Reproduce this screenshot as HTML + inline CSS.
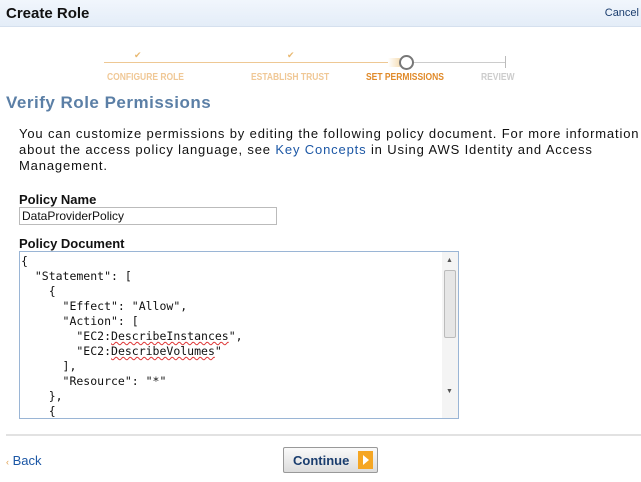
<!DOCTYPE html>
<html><head><style>
*{margin:0;padding:0;box-sizing:border-box}
body{width:641px;height:482px;background:#fff;font-family:"Liberation Sans",sans-serif;position:relative;overflow:hidden}
.hdr{position:absolute;left:0;top:0;width:641px;height:27px;background:linear-gradient(#f1f6fc,#e4edf8);border-bottom:1px solid #d5e0ee}
.hdr b{position:absolute;left:6px;top:5px;font-size:15px;color:#111}
.hdr span{position:absolute;right:2px;top:7px;font-size:11px;color:#1a3d6e}
.step{position:absolute;top:72px;font-size:10px;font-weight:bold;transform:scaleX(0.85);transform-origin:0 0;white-space:nowrap}
.ck{position:absolute;top:50px;font-size:9px;color:#e8b870}
h2{position:absolute;left:6px;top:93px;font-size:17px;color:#5b7fa6;letter-spacing:0.5px}
p.t{position:absolute;left:19px;top:126px;font-size:13px;line-height:16px;color:#111;white-space:nowrap;letter-spacing:0.85px}
p.t a{color:#1c57a5}
.lbl{position:absolute;left:19px;font-size:13px;font-weight:bold;color:#111}
.inp{position:absolute;left:19px;top:207px;width:258px;height:18px;border:1px solid #bbb;font-size:12px;padding:1px 2px;color:#111}
.ta{position:absolute;left:19px;top:251px;width:440px;height:168px;border:1px solid #9ab5d5;overflow:hidden}
pre{font-family:"DejaVu Sans Mono","Liberation Mono",monospace;font-size:11.5px;line-height:15px;color:#111;padding:2px 0 0 1px}
.sq{text-decoration:underline wavy #d33;text-decoration-thickness:1px}
.sb{position:absolute;right:0;top:0;width:16px;height:100%;background:#f4f4f4}
.thumb{position:absolute;left:2px;top:18px;width:12px;height:68px;background:#e6e6e6;border:1px solid #bbb;border-radius:2px}
.ar{position:absolute;left:4px;font-size:7px;color:#555}
.hr{position:absolute;left:6px;top:434px;width:635px;height:2px;background:#e2e2e2}
.back{position:absolute;left:6px;top:453px;font-size:13px;color:#1c57a5}
.btn{position:absolute;left:283px;top:447px;width:95px;height:26px;border:1px solid #999;border-radius:2px;background:linear-gradient(#fafafa,#dcdcdc)}
.btn b{position:absolute;left:9px;top:5px;font-size:13px;color:#1a3d6e}
.btn i{position:absolute;right:4px;top:3px;width:15px;height:18px;background:#f5a623}
.btn i:after{content:"";position:absolute;left:5px;top:4px;border-left:6px solid #fff;border-top:5px solid transparent;border-bottom:5px solid transparent}
</style></head><body>
<div class="hdr"><b>Create Role</b><span>Cancel</span></div>
<div style="position:absolute;left:104px;top:62px;width:286px;height:1px;background:#eec894"></div>
<div style="position:absolute;left:388px;top:58px;width:12px;height:9px;background:linear-gradient(90deg,#fff,#f6dfb8)"></div>
<div style="position:absolute;left:413px;top:62px;width:93px;height:1px;background:#ccc"></div>
<div style="position:absolute;left:505px;top:56px;width:1px;height:12px;background:#bbb"></div>
<div style="position:absolute;left:399px;top:55px;width:15px;height:15px;border:2px solid #777;border-radius:50%;background:#fff"></div>
<div class="ck" style="left:134px">✔</div><div class="ck" style="left:287px">✔</div>
<div class="step" style="left:107px;color:#f0c896">CONFIGURE ROLE</div>
<div class="step" style="left:251px;color:#f0c896">ESTABLISH TRUST</div>
<div class="step" style="left:366px;color:#e08a2a">SET PERMISSIONS</div>
<div class="step" style="left:481px;color:#ccc">REVIEW</div>
<h2>Verify Role Permissions</h2>
<p class="t">You can customize permissions by editing the following policy document. For more information<br>about the access policy language, see <a>Key Concepts</a> in Using AWS Identity and Access<br>Management.</p>
<div class="lbl" style="top:192px">Policy Name</div>
<div class="inp">DataProviderPolicy</div>
<div class="lbl" style="top:236px">Policy Document</div>
<div class="ta"><pre>{
  "Statement": [
    {
      "Effect": "Allow",
      "Action": [
        "EC2:<span class="sq">DescribeInstances</span>",
        "EC2:<span class="sq">DescribeVolumes</span>"
      ],
      "Resource": "*"
    },
    {</pre><div class="sb"><div class="ar" style="top:5px">▲</div><div class="thumb"></div><div class="ar" style="top:136px">▼</div></div></div>
<div class="hr"></div>
<div class="back"><span style="color:#e0a050;font-size:9px">‹</span> Back</div>
<div class="btn"><b>Continue</b><i></i></div>
</body></html>
